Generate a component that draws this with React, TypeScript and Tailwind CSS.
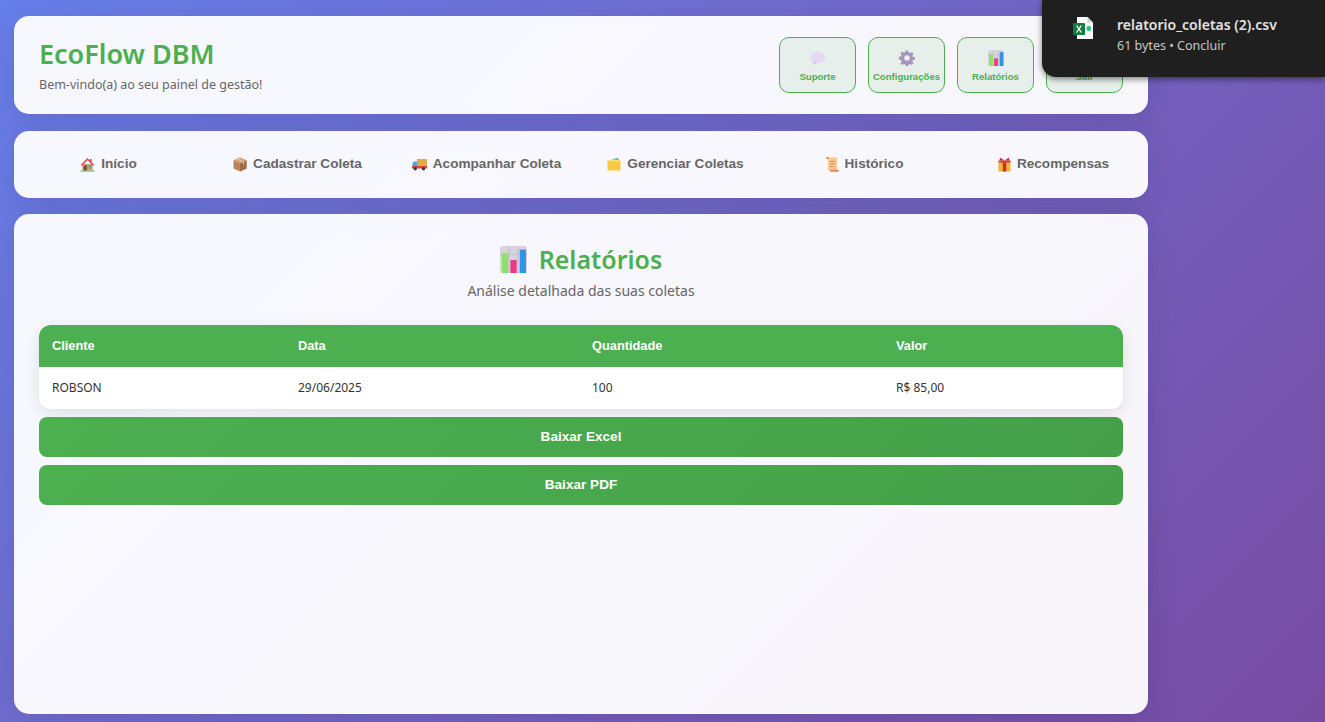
const HouseIcon = () => (
  <svg width="15" height="15" viewBox="0 0 16 16" className="shrink-0">
    <rect x="0.5" y="14.2" width="15" height="1.5" fill="#5fd08a" />
    <path d="M2.5 7.5h11v6.8h-11z" fill="#c99a72" />
    <path d="M8 1 0.8 8.2l1.2 1L8 3.4l6 5.8 1.2-1L12.6 5.600V2h-1.800v1.800z" fill="#d9534f" />
    <rect x="4" y="9" width="3.200" height="5.300" fill="#7a4a32" />
    <rect x="9.500" y="8.500" width="2.800" height="2.800" fill="#45a9e6" />
  </svg>
);

const PackageIcon = () => (
  <svg width="14" height="15" viewBox="0 0 14 15" className="shrink-0">
    <path d="M7 .5 13.500 3.500v8L7 14.500.5 11.500v-8z" fill="#b98559" />
    <path d="M7 .5 13.500 3.500 7 6.500.5 3.500z" fill="#d2a67e" />
    <path d="M7 6.500v8l6.500-3v-8z" fill="#a06f48" />
    <path d="M3.500 2 10 5v2.500l1-.5V4.500L4.700 1.500z" fill="#e8cdb0" />
  </svg>
);

const TruckIcon = () => (
  <svg width="15" height="13" viewBox="0 0 15 13" className="shrink-0">
    <rect x="5" y="1" width="10" height="8" fill="#e3a945" />
    <path d="M0.500 5.500 2 3.500h3v6H.5z" fill="#4aa3df" />
    <rect x="0" y="8" width="15" height="2.500" fill="#d8453e" />
    <circle cx="3.200" cy="10.800" r="1.700" fill="#3a3a45" />
    <circle cx="11.500" cy="10.800" r="1.700" fill="#3a3a45" />
  </svg>
);

const FolderIcon = () => (
  <svg width="14" height="14" viewBox="0 0 14 14" className="shrink-0">
    <rect x="0.500" y="3" width="13" height="10.500" rx="1" fill="#f6c944" />
    <path d="M4 2.500 11 .8l1 2.200z" fill="#5fb8a0" />
    <rect x="0.500" y="3" width="13" height="1.500" fill="#fbdc7a" />
  </svg>
);

const ScrollIcon = () => (
  <svg width="13" height="15" viewBox="0 0 13 15" className="shrink-0">
    <rect x="2" y="0.500" width="9" height="13" fill="#f6c796" />
    <rect x="0" y="0" width="3" height="2" rx="1" fill="#d98e52" />
    <rect x="4" y="12.800" width="9" height="2" rx="1" fill="#d98e52" />
    <path d="M4 4h5v1H4zm0 2.500h5v1H4zm0 2.500h3.500v1H4z" fill="#d98e52" />
  </svg>
);

const GiftIcon = () => (
  <svg width="13" height="15" viewBox="0 0 13 15" className="shrink-0">
    <rect x="0.500" y="4" width="12" height="10.500" fill="#f2b632" />
    <rect x="4.800" y="4" width="3.400" height="10.500" fill="#c9303a" />
    <rect x="0.500" y="3.500" width="12" height="2" fill="#d8403f" />
    <path d="M6.500 3.500 2 .5 1.500 3.500zM6.500 3.500 11 .5l.5 3z" fill="#c9303a" />
  </svg>
);

const BubbleIcon = () => (
  <svg width="16" height="15" viewBox="0 0 16 15">
    <ellipse cx="8" cy="6.500" rx="7.500" ry="5.500" fill="#e4d9f4" />
    <path d="M3.500 10 3 14l4.500-2.500z" fill="#d6c6ec" />
  </svg>
);

const GearIcon = () => (
  <svg width="16" height="16" viewBox="0 0 16 16">
    <path
      d="M6.800.5h2.400l.4 2 1.500.6 1.700-1.100 1.700 1.700-1.100 1.700.6 1.500 2 .4v2.400l-2 .4-.6 1.500 1.100 1.700-1.700 1.700-1.700-1.100-1.500.6-.4 2H6.800l-.4-2-1.500-.6-1.700 1.100-1.700-1.700 1.100-1.700-.6-1.500-2-.4V6.800l2-.4.600-1.500L1.300 3.200 3 1.500l1.700 1.100 1.500-.6z"
      fill="#a695bd"
    />
    <circle cx="8" cy="8" r="2.700" fill="#eef0f2" />
  </svg>
);

const ChartIcon = ({ size }: { size: number }) => (
  <svg width={size} height={size} viewBox="0 0 26 26" className="shrink-0">
    <rect width="26" height="26" rx="3" fill="#d6d3de" />
    <path d="M8.500 0v26M17 0v26M0 8h26" stroke="#c2bfcc" strokeWidth="1" />
    <rect x="2" y="7" width="6" height="19" fill="#8ee06a" />
    <rect x="10" y="13.500" width="6" height="12.500" fill="#ea3a82" />
    <rect x="19" y="3.500" width="6" height="22.500" fill="#2f94e8" />
  </svg>
);

const DoorIcon = () => (
  <svg width="14" height="16" viewBox="0 0 14 16">
    <rect x="2" y="0.500" width="10" height="15" fill="#b59a84" />
  </svg>
);

const ExcelIcon = () => (
  <svg width="22" height="24" viewBox="0 0 22 24">
    <path d="M4 1h10.500L20 6.500V23H4z" fill="#ffffff" />
    <path d="M14.500 1v5.500H20z" fill="#cfd3d2" />
    <rect x="0" y="7" width="12" height="12" rx="1" fill="#107c41" />
    <path d="m3 9.500 1.500 0L6 12l1.500-2.500H9L6.800 13 9 16.500H7.500L6 14l-1.500 2.500H3L5.200 13z" fill="#ffffff" />
    <rect x="13.500" y="10" width="4.500" height="5" rx="2" fill="#21c574" />
  </svg>
);

const headerButtons = [
  { label: "Suporte", icon: <BubbleIcon /> },
  { label: "Configurações", icon: <GearIcon /> },
  { label: "Relatórios", icon: <ChartIcon size={16} /> },
  { label: "Sair", icon: <DoorIcon /> },
];

const navItems = [
  { label: "Início", icon: <HouseIcon /> },
  { label: "Cadastrar Coleta", icon: <PackageIcon /> },
  { label: "Acompanhar Coleta", icon: <TruckIcon /> },
  { label: "Gerenciar Coletas", icon: <FolderIcon /> },
  { label: "Histórico", icon: <ScrollIcon /> },
  { label: "Recompensas", icon: <GiftIcon /> },
];

const segoe = "font-['Noto_Sans','Open_Sans',sans-serif]";
const arial = "font-['Liberation_Sans',Arial,sans-serif]";

const App = () => {
  return (
    <div className={`relative h-[722px] w-[1325px] overflow-hidden bg-linear-135 from-[#667eea] to-[#764ba2] pl-[14px] pt-4 ${segoe}`}>
      <div className="flex w-[1134px] flex-col gap-4">
        <header className="flex h-[98px] items-center justify-between rounded-[15px] bg-white/95 px-[25px] shadow-[0_8px_32px_rgba(0,0,0,0.1)]">
          <div>
            <h1 className="text-[27px] leading-[34px] font-semibold text-[#4caf50]">EcoFlow DBM</h1>
            <p className="mt-[5px] text-[12.5px] leading-[17px] text-[#666666]">Bem-vindo(a) ao seu painel de gestão!</p>
          </div>
          <div className="flex gap-3">
            {headerButtons.map((btn) => (
              <button
                key={btn.label}
                className={`flex h-14 w-[77px] flex-col items-center justify-start gap-[5px] rounded-[10px] border border-[#4caf50] bg-[#4caf50]/10 pt-[12px] text-[9.6px] leading-[12px] font-bold whitespace-nowrap text-[#4caf50] ${arial}`}
              >
                <span className="flex h-4 items-center">{btn.icon}</span>
                <span className="flex w-full justify-center">{btn.label}</span>
              </button>
            ))}
          </div>
        </header>

        <nav className="mt-px flex h-[67px] items-center rounded-[15px] bg-white/95 shadow-[0_8px_32px_rgba(0,0,0,0.1)]">
          {navItems.map((item) => (
            <a
              key={item.label}
              className={`flex flex-1 items-center justify-center gap-[6px] text-[13.6px] font-bold text-[#666666] ${arial}`}
            >
              {item.icon}
              {item.label}
            </a>
          ))}
        </nav>

        <main className="h-[500px] rounded-[15px] bg-white/95 px-[25px] pt-[28px] shadow-[0_8px_32px_rgba(0,0,0,0.1)]">
          <div className="flex items-center justify-center gap-3">
            <ChartIcon size={27} />
            <h2 className="text-[25px] leading-[34px] font-semibold text-[#4caf50]">Relatórios</h2>
          </div>
          <p className="mt-[5px] text-center text-[14px] leading-[20px] text-[#666666]">Análise detalhada das suas coletas</p>

          <div className="mt-[24px] overflow-hidden rounded-xl bg-white shadow-[0_4px_15px_rgba(0,0,0,0.1)]">
            <table className="w-full table-fixed border-collapse text-left">
              <thead>
                <tr className={`h-[42px] bg-[#4caf50] text-[12.8px] font-bold text-white ${arial}`}>
                  <th className="w-[246px] pl-[13px] font-bold">Cliente</th>
                  <th className="w-[294px] pl-[13px] font-bold">Data</th>
                  <th className="w-[304px] pl-[13px] font-bold">Quantidade</th>
                  <th className="pl-[13px] font-bold">Valor</th>
                </tr>
              </thead>
              <tbody>
                <tr className="h-[42px] text-[12px] text-[#333333]">
                  <td className="pl-[13px]">ROBSON</td>
                  <td className="pl-[13px]">29/06/2025</td>
                  <td className="pl-[13px]">100</td>
                  <td className="pl-[13px]">R$ 85,00</td>
                </tr>
              </tbody>
            </table>
          </div>

          <div className="mt-2 flex flex-col gap-2">
            <button className={`h-10 rounded-lg bg-linear-135 from-[#4caf50] to-[#45a049] text-[13.6px] font-bold text-white ${arial}`}>Baixar Excel</button>
            <button className={`h-10 rounded-lg bg-linear-135 from-[#4caf50] to-[#45a049] text-[13.6px] font-bold text-white ${arial}`}>Baixar PDF</button>
          </div>
        </main>
      </div>

      {/* download toast from the browser, sits over the header */}
      <div className="absolute top-0 right-0 flex h-[77px] w-[283px] items-start rounded-bl-[14px] bg-[#1f1f1f] pt-[16px] pl-[31px] shadow-[0_2px_6px_rgba(0,0,0,0.5)]">
        <ExcelIcon />
        <div className="ml-[22px]">
          <div className="text-[14px] leading-[18px] font-semibold text-[#e3e3e3]">relatorio_coletas (2).csv</div>
          <div className="mt-[3px] text-[12.5px] leading-[17px] text-[#c7c7c7]">61 bytes • Concluir</div>
        </div>
      </div>
    </div>
  );
};

export default App;
